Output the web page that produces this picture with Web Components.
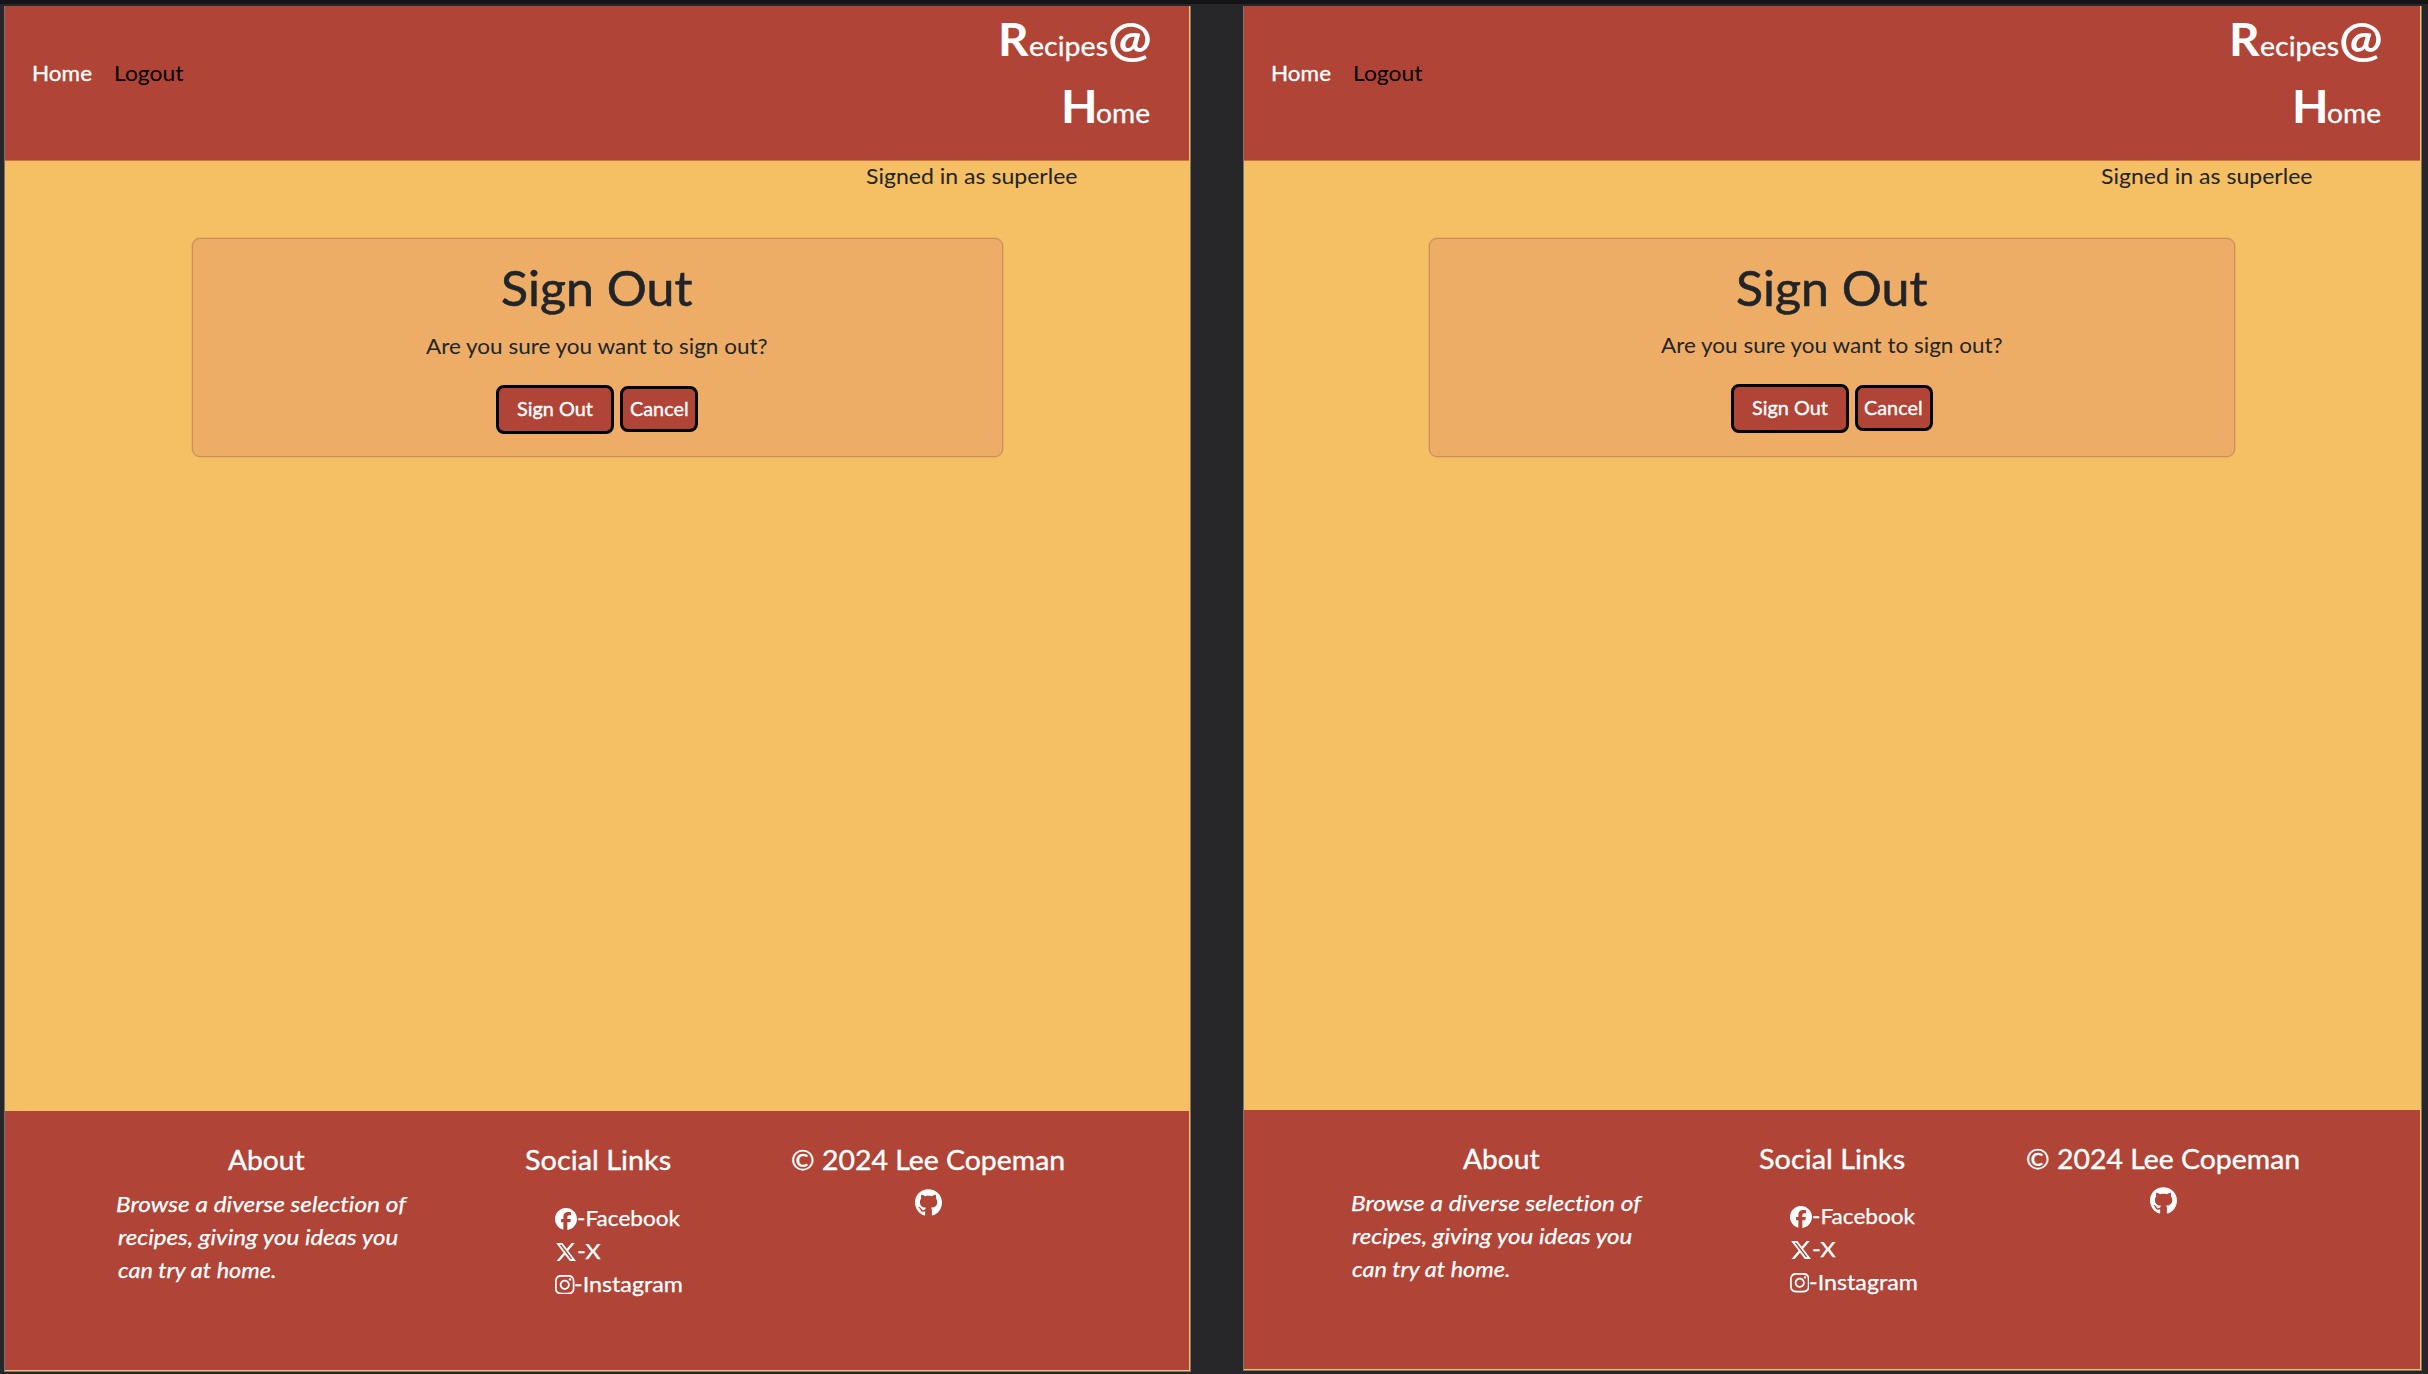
<!DOCTYPE html>
<html lang="en">
<head>
<meta charset="utf-8">
<title>Recipes@Home</title>
<style>
html,body{margin:0;height:100%}
body{background:#272729;font-family:Lato,"Open Sans",sans-serif;overflow:hidden}
</style>
</head>
<body>
<compare-stage>
  <recipe-screen></recipe-screen>
  <recipe-screen variant="second"></recipe-screen>
</compare-stage>
<script>
const ctx = document.createElement('canvas').getContext('2d');
const attach = (el, html) => { el.attachShadow({mode:'open'}).innerHTML = html; };

/* One line of text widened so that its ink spans exactly w pixels. */
customElements.define('fit-line', class extends HTMLElement {
  connectedCallback() {
    if (this.shadowRoot) return;
    const size = +this.getAttribute('size') || 21.7, w = +this.getAttribute('w');
    const lh = +this.getAttribute('lh') || 33, weight = this.getAttribute('weight') || 400;
    const style = this.getAttribute('slant') || 'normal', stroke = this.getAttribute('stroke') || 0;
    ctx.font = `${style} ${weight} ${size}px Lato`;
    ctx.letterSpacing = '0.01px';
    const m = ctx.measureText(this.textContent.trim());
    const k = w / (m.actualBoundingBoxLeft + m.actualBoundingBoxRight);
    attach(this, `<style>
      :host{display:block;flex:none;width:${w}px;height:${lh}px;white-space:nowrap;font:${style} ${weight} ${size}px/${lh}px Lato,"Open Sans",sans-serif;letter-spacing:.01px;font-variant-ligatures:none;-webkit-text-stroke:${stroke}px currentColor}
      span{display:inline-block;transform:scaleX(${k});transform-origin:0 0;margin-left:${m.actualBoundingBoxLeft * k}px}
    </style><span><slot></slot></span>`);
  }
});

const ICONS = {
  facebook: ['0 0 512 512', 'M512 256C512 114.6 397.4 0 256 0S0 114.6 0 256C0 376 82.7 476.8 194.2 504.5V334.2H141.4V256h52.8V222.3c0-87.1 39.4-127.5 125-127.5c16.2 0 44.2 3.2 55.7 6.4V172c-6-.6-16.5-1-29.6-1c-42 0-58.2 15.9-58.2 57.2V256h83.6l-14.4 78.2H287V510.1C413.8 494.8 512 386.9 512 256z'],
  x: ['0 0 512 512', 'M389.2 48h70.6L305.6 224.2 487 464H345L233.7 318.6 106.5 464H35.8L200.7 275.5 26.8 48H172.4L272.9 180.9 389.2 48zM364.4 421.8h39.1L151.1 88h-42L364.4 421.8z'],
  instagram: ['0 32 448 448', 'M224.1 141c-63.6 0-114.9 51.3-114.9 114.9s51.3 114.9 114.9 114.9S339 319.5 339 255.9 287.7 141 224.1 141zm0 189.6c-41.1 0-74.7-33.5-74.7-74.7s33.5-74.7 74.7-74.7 74.7 33.5 74.7 74.7-33.6 74.7-74.7 74.7zm146.4-194.3c0 14.9-12 26.8-26.8 26.8-14.9 0-26.8-12-26.8-26.8s12-26.8 26.8-26.8 26.8 12 26.8 26.8zm76.1 27.2c-1.7-35.9-9.9-67.7-36.2-93.9-26.2-26.2-58-34.4-93.9-36.2-37-2.1-147.9-2.1-184.9 0-35.8 1.7-67.6 9.9-93.9 36.1s-34.4 58-36.2 93.9c-2.1 37-2.1 147.9 0 184.9 1.7 35.9 9.9 67.7 36.2 93.9s58 34.4 93.9 36.2c37 2.1 147.9 2.1 184.9 0 35.9-1.7 67.7-9.9 93.9-36.2 26.2-26.2 34.4-58 36.2-93.9 2.1-37 2.1-147.8 0-184.8zM398.8 388c-7.8 19.6-22.9 34.7-42.6 42.6-29.5 11.7-99.5 9-132.1 9s-102.7 2.6-132.1-9c-19.6-7.8-34.7-22.9-42.6-42.6-11.7-29.5-9-99.5-9-132.1s-2.6-102.7 9-132.1c7.8-19.6 22.9-34.7 42.6-42.6 29.5-11.7 99.5-9 132.1-9s102.7-2.6 132.1 9c19.6 7.8 34.7 22.9 42.6 42.6 11.7 29.5 9 99.5 9 132.1s2.7 102.7-9 132.1z'],
  github: ['0 4 496 496', 'M165.9 397.4c0 2-2.3 3.6-5.2 3.6-3.3.3-5.6-1.3-5.6-3.6 0-2 2.3-3.6 5.2-3.6 3-.3 5.6 1.3 5.6 3.6zm-31.1-4.5c-.7 2 1.3 4.3 4.3 4.9 2.6 1 5.6 0 6.2-2s-1.3-4.3-4.3-5.2c-2.6-.7-5.5.3-6.2 2.3zM244.8 8C106.1 8 0 113.3 0 252c0 110.9 69.8 205.8 169.5 239.2 12.8 2.3 17.3-5.6 17.3-12.1 0-6.2-.3-40.4-.3-61.4 0 0-70 15-84.7-29.8 0 0-11.4-29.1-27.8-36.6 0 0-22.9-15.7 1.6-15.4 0 0 24.9 2 38.6 25.8 21.9 38.6 58.6 27.5 72.9 20.9 2.3-16 8.8-27.1 16-33.7-55.9-6.2-112.3-14.3-112.3-110.5 0-27.5 7.6-41.3 23.6-58.9-2.6-6.5-11.1-33.3 2.6-67.9 20.9-6.5 69 27 69 27 20-5.6 41.5-8.5 62.8-8.5s42.8 2.9 62.8 8.5c0 0 48.1-33.6 69-27 13.7 34.7 5.2 61.4 2.6 67.9 16 17.7 25.8 31.5 25.8 58.9 0 96.5-58.9 104.2-114.8 110.5 9.2 7.9 17 22.9 17 46.4 0 33.7-.3 75.4-.3 83.6 0 6.5 4.6 14.4 17.3 12.1C428.2 457.8 496 362.9 496 252 496 113.3 383.5 8 244.8 8z']
};
customElements.define('brand-icon', class extends HTMLElement {
  connectedCallback() {
    if (this.shadowRoot) return;
    const [box, d] = ICONS[this.getAttribute('name')], s = this.getAttribute('size');
    attach(this, `<style>:host{display:block;flex:none;width:${s}px;height:${s}px}svg{display:block}</style>
      <svg width="${s}" height="${s}" viewBox="${box}" fill="currentColor"><path d="${d}"/></svg>`);
  }
});

customElements.define('compare-stage', class extends HTMLElement {
  constructor() { super(); attach(this, `<style>
    :host{display:flex;align-items:flex-start;gap:52px;box-sizing:border-box;width:2428px;height:1374px;border-top:4px solid #151518;padding:2px 0 0 4px;background:#272729}
  </style><slot></slot>`); }
});

customElements.define('site-header', class extends HTMLElement {
  constructor() { super(); attach(this, `<style>
    :host{display:flex;justify-content:space-between;align-items:flex-start;box-sizing:border-box;height:155px;padding:0 39px 0 28.5px;background:#b04437;border-bottom:1px solid #cf7247;color:#fff}
    nav{display:flex;gap:23.5px;padding-top:51px}
    .brand{display:flex;flex-direction:column;align-items:flex-end;gap:8px;padding-top:2px}
    .row{display:flex;align-items:baseline;height:60px}
    .dark{color:#000}
  </style>
  <nav><fit-line w="58.5" stroke=".3">Home</fit-line><fit-line class="dark" w="68.5">Logout</fit-line></nav>
  <div class="brand">
    <div class="row"><fit-line w="28" size="46" lh="60" weight="700">R</fit-line><fit-line w="77" size="27.5" lh="36" stroke=".3" style="margin-left:1px">ecipes</fit-line><fit-line w="40" size="48" lh="60" weight="700" style="margin-left:3px">@</fit-line></div>
    <div class="row"><fit-line w="30" size="46" lh="60" weight="700">H</fit-line><fit-line w="52.5" size="27.5" lh="36" stroke=".3" style="margin-left:3px">ome</fit-line></div>
  </div>`); }
});

customElements.define('sign-out-card', class extends HTMLElement {
  constructor() { super(); attach(this, `<style>
    :host{display:flex;flex-direction:column;align-items:center;box-sizing:border-box;width:var(--card-w);height:var(--card-h);margin:47px 0 0 var(--card-x);border:1px solid #c98f59;box-shadow:0 0 0 .5px #dba65e;border-radius:8px;background:#edad66;padding-top:18px;color:#212529}
    .ask{margin-top:var(--ask-gap)}
    .actions{display:flex;align-items:center;gap:6px;margin-top:24.5px;color:#fff}
    .btn{display:flex;align-items:center;justify-content:center;box-sizing:border-box;border:3px solid #000;border-radius:8px;background:#b04437}
    .main{width:117.5px;height:48.5px}
    .alt{width:78.5px;height:46px}
    .alt fit-line{margin-right:1px}
  </style>
  <fit-line w="190" size="48.5" lh="60" stroke=".6">Sign Out</fit-line>
  <fit-line class="ask" w="342.5" lh="30">Are you sure you want to sign out?</fit-line>
  <div class="actions"><div class="btn main"><fit-line w="76" size="19.3" lh="28" stroke=".35">Sign Out</fit-line></div><div class="btn alt"><fit-line w="58" size="19.3" lh="28" stroke=".35">Cancel</fit-line></div></div>`); }
});

customElements.define('site-footer', class extends HTMLElement {
  constructor() { super(); attach(this, `<style>
    :host{display:flex;box-sizing:border-box;height:259px;padding:31px 0 0 var(--foot-x);background:#b04437;color:#fff}
    section{flex:none}
    .about{width:407px}.social{width:268px}
    .body{padding-top:10px}
    .list{padding:var(--list-gap) 0 0 30.5px}
    .item{display:flex;align-items:center;height:33px}
    .item brand-icon{margin-top:1px}
    .git{margin:var(--git-gap) 0 0 122.5px}
  </style>
  <section class="about"><fit-line w="77" size="27" lh="36" stroke=".35" style="margin-left:110.5px">About</fit-line>
    <div class="body"><fit-line w="290" slant="italic" stroke=".25">Browse a diverse selection of</fit-line><fit-line w="281" slant="italic" stroke=".25">recipes, giving you ideas you</fit-line><fit-line w="158" slant="italic" stroke=".25">can try at home.</fit-line></div></section>
  <section class="social"><fit-line w="145.5" size="27" lh="36" stroke=".35">Social Links</fit-line>
    <div class="list">
      <div class="item"><brand-icon name="facebook" size="22"></brand-icon><fit-line w="102" stroke=".25" style="margin-left:1.5px">-Facebook</fit-line></div>
      <div class="item"><brand-icon name="x" size="22"></brand-icon><fit-line w="22.5" stroke=".25" style="margin-left:1.5px">-X</fit-line></div>
      <div class="item"><brand-icon name="instagram" size="19.5"></brand-icon><fit-line w="107" stroke=".25" style="margin-left:1px">-Instagram</fit-line></div>
    </div></section>
  <section><fit-line w="272" size="27" lh="36" stroke=".35">© 2024 Lee Copeman</fit-line><brand-icon class="git" name="github" size="27"></brand-icon></section>`); }
});

customElements.define('recipe-screen', class extends HTMLElement {
  constructor() { super(); attach(this, `<style>
    :host{display:block;flex:none;width:1184px;border:solid #777;border-width:0 1px 1px;padding:0 1px 1px 0;background:#f5bf63;
      --main-h:950px;--sign-x:861px;--card-x:187px;--card-w:810.5px;--card-h:219px;--ask-gap:13.5px;--foot-x:112.5px;--list-gap:23.5px;--git-gap:11px}
    :host([variant=second]){width:1176px;--main-h:949px;--sign-x:856.5px;--card-x:185px;--card-w:806px;--card-h:218.5px;--ask-gap:12.5px;--foot-x:108px;--list-gap:23px;--git-gap:10px}
    main{height:var(--main-h);color:#212529;display:flow-root}
    .user{margin-left:var(--sign-x)}
  </style>
  <site-header></site-header>
  <main><fit-line class="user" w="211" lh="30">Signed in as superlee</fit-line><sign-out-card></sign-out-card></main>
  <site-footer></site-footer>`); }
});
</script>
</body>
</html>
